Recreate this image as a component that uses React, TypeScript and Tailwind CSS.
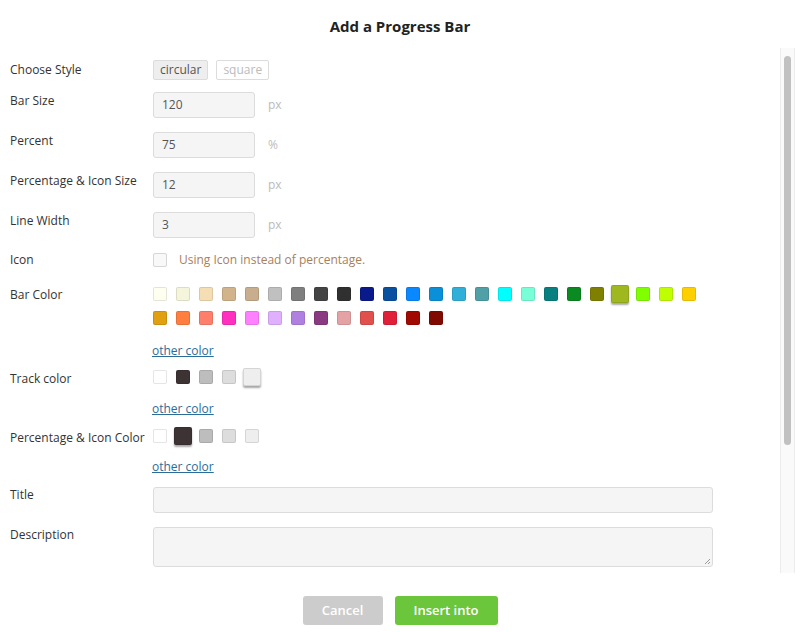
const barColors = [
  "#fffff0", "#f5f5dc", "#f5deb3", "#d2b48c", "#c8ae8c", "#c0c0c0", "#7f7f7f", "#444444",
  "#303030", "#0a1a8a", "#0a50a0", "#0a88ff", "#0a90d8", "#30b0d8", "#50a0a8", "#00ffff",
  "#78ffd8", "#088080", "#0a8a20", "#808000", "#a0b820", "#80ff00", "#c0ff00", "#ffd000",
];
const barColors2 = [
  "#e0a010", "#ff7e40", "#ff7f6a", "#ff30c0", "#ff80ff", "#e0b0ff", "#b080e0", "#8a3a80",
  "#e4a2a4", "#e0504c", "#e02038", "#a00a00", "#800a00",
];
const greys = ["#ffffff", "#3d3335", "#bdbdbd", "#dddddd", "#eeeeee"];

const Swatch = ({ color, selected }: { color: string; selected?: boolean }) => (
  <div
    className={
      selected
        ? "w-[18px] h-[18px] -m-[2px] rounded-[2px] border border-black/10 shadow-[0_2px_2px_rgba(0,0,0,0.35)] shrink-0"
        : "w-[14px] h-[14px] rounded-[2px] border border-black/10 shrink-0"
    }
    style={{ backgroundColor: color }}
  />
);

const Label = ({ children }: { children: React.ReactNode }) => (
  <div className="w-[143px] shrink-0 text-[12px] leading-[18px] text-[#333]">{children}</div>
);

const NumRow = ({ label, value, unit, top }: { label: string; value: string; unit: string; top: string }) => (
  <div className={"flex " + top}>
    <Label>{label}</Label>
    <div className="w-[102px] h-[26px] bg-[#f5f5f5] border border-[#dcdcdc] rounded-[3px] px-[8px] text-[12px] leading-[24px] text-[#555]">
      {value}
    </div>
    <div className="ml-[13px] text-[12px] leading-[26px] text-[#bbb]">{unit}</div>
  </div>
);

const OtherColor = ({ top }: { top: string }) => (
  <div className={"flex " + top}>
    <div className="w-[142px] shrink-0" />
    <a className="text-[12px] leading-[18px] text-[#2b6d97] underline">other color</a>
  </div>
);

export default function App() {
  return (
    <div className="w-[800px] h-[632px] bg-white flex flex-col" style={{ fontFamily: '"Open Sans", "Liberation Sans", sans-serif' }}>
      <div className="h-[48px] shrink-0 flex justify-center pt-[16px]">
        <div className="text-[15px] leading-[20px] font-bold text-[#222]">Add a Progress Bar</div>
      </div>
      <div className="h-[525px] shrink-0 flex">
        <div className="flex-1 pl-[10px] pt-[12px] flex flex-col">
          <div className="flex items-center h-[20px]">
            <Label>Choose Style</Label>
            <div className="flex gap-[8px]">
              <div className="h-[20px] px-[6px] bg-[#eeeeee] border border-[#dcdcdc] rounded-[2px] text-[12px] leading-[18px] text-[#555]">circular</div>
              <div className="h-[20px] px-[6px] bg-white border border-[#dcdcdc] rounded-[2px] text-[12px] leading-[18px] text-[#bbb]">square</div>
            </div>
          </div>
          <NumRow label="Bar Size" value="120" unit="px" top="mt-[12px]" />
          <NumRow label="Percent" value="75" unit="%" top="mt-[14px]" />
          <NumRow label="Percentage & Icon Size" value="12" unit="px" top="mt-[14px]" />
          <NumRow label="Line Width" value="3" unit="px" top="mt-[14px]" />
          <div className="flex mt-[13px]">
            <Label>Icon</Label>
            <div className="flex items-center gap-[12px]">
              <div className="w-[14px] h-[14px] border border-[#d6d6d6] rounded-[2px] bg-[#f8f8f8]" />
              <span className="text-[12px] leading-[18px] text-[#a9805a]">Using Icon instead of percentage.</span>
            </div>
          </div>
          <div className="flex mt-[17px]">
            <Label>Bar Color</Label>
            <div className="flex flex-col gap-[10px] pt-[1px]">
              <div className="flex gap-[9px] items-center">
                {barColors.map((c, i) => (
                  <Swatch key={i} color={c} selected={i === 20} />
                ))}
              </div>
              <div className="flex gap-[9px] items-center">
                {barColors2.map((c, i) => (
                  <Swatch key={i} color={c} />
                ))}
              </div>
            </div>
          </div>
          <OtherColor top="mt-[17px]" />
          <div className="flex mt-[10px]">
            <Label>Track color</Label>
            <div className="flex gap-[9px] items-start">
              {greys.map((c, i) => (
                <Swatch key={i} color={c} selected={i === 4} />
              ))}
            </div>
          </div>
          <OtherColor top="mt-[12px]" />
          <div className="flex mt-[11px]">
            <Label>Percentage &amp; Icon Color</Label>
            <div className="flex gap-[9px] items-start">
              {greys.map((c, i) => (
                <Swatch key={i} color={c} selected={i === 1} />
              ))}
            </div>
          </div>
          <OtherColor top="mt-[11px]" />
          <div className="flex mt-[10px]">
            <Label>Title</Label>
            <div className="w-[560px] h-[26px] mt-[1px] bg-[#f5f5f5] border border-[#dcdcdc] rounded-[3px]" />
          </div>
          <div className="flex mt-[13px]">
            <Label>Description</Label>
            <div className="relative w-[560px] h-[40px] mt-[1px] bg-[#f5f5f5] border border-[#dcdcdc] rounded-[3px]">
              <svg className="absolute right-[1px] bottom-[1px]" width="8" height="8" viewBox="0 0 8 8">
                <path d="M7 2 L2 7 M7 5 L5 7" stroke="#999" strokeWidth="1" />
              </svg>
            </div>
          </div>
        </div>
        <div className="w-[15px] mr-[5px] border-x border-[#ececec] bg-[#fafafa] flex justify-center pt-[8px]">
          <div className="w-[7px] h-[389px] rounded-full bg-[#c1c1c1]" />
        </div>
      </div>
      <div className="flex justify-center gap-[12px] mt-[23px]">
        <div className="w-[80px] h-[29px] rounded-[3px] bg-[#cccccc] text-white text-[13px] font-semibold leading-[29px] text-center">Cancel</div>
        <div className="w-[103px] h-[29px] rounded-[3px] bg-[#6cc63c] text-white text-[13px] font-semibold leading-[29px] text-center">Insert into</div>
      </div>
    </div>
  );
}
